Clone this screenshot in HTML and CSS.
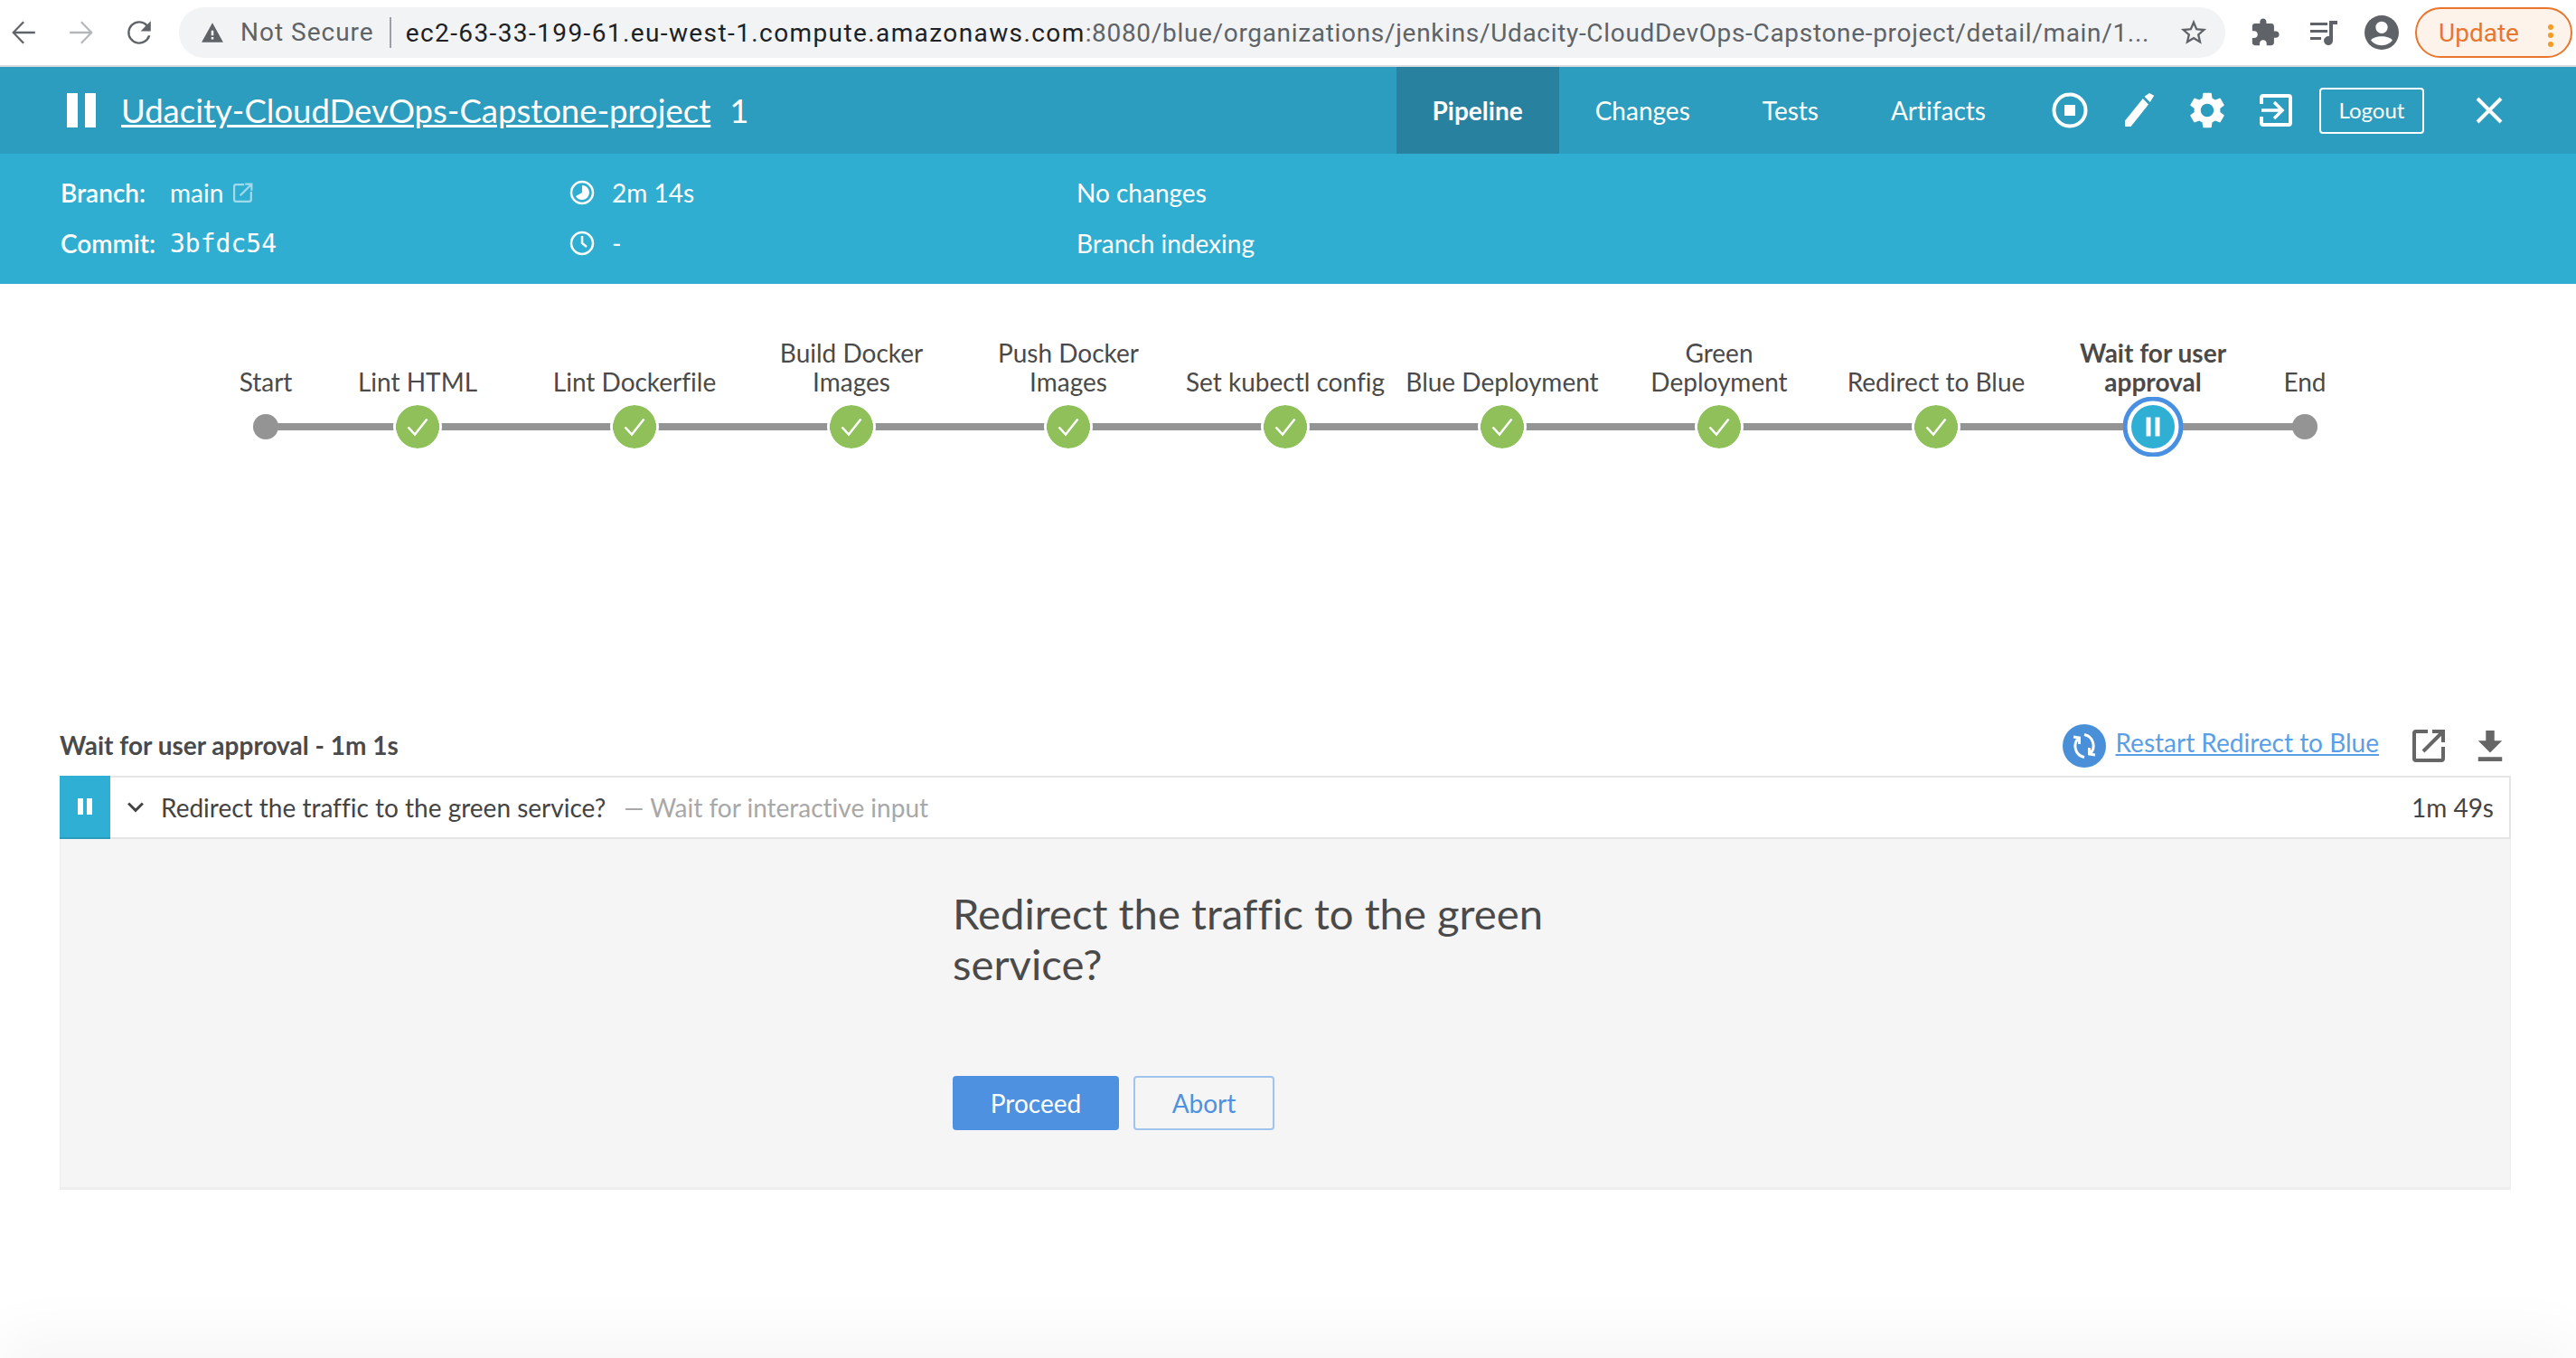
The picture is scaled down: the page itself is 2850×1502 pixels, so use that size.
FILE: index.html
```html
<!DOCTYPE html>
<html lang="en">
<head>
    <meta charset="UTF-8">
    <title>Udacity-CloudDevOps-Capstone-project 1</title>
    <link rel="stylesheet" href="styles.css">
</head>
<body>
<div class="toolbar">
    <svg class="tool-icon nav-back" viewBox="2 2 20 20"><path d="M20 11.2H6.600l6-6-1-1L4 12l7.600 7.800 1-1-6-6H20z"/></svg>
    <svg class="tool-icon nav-forward" viewBox="2 2 20 20"><path d="M4 11.2h13.400l-6-6 1-1L20 12l-7.600 7.800-1-1 6-6H4z"/></svg>
    <svg class="tool-icon nav-reload" viewBox="2 2 20 20"><path d="M17.65 6.35A7.96 7.96 0 0 0 12 4a8 8 0 1 0 7.730 10h-1.600A6.500 6.500 0 1 1 12 5.500c1.800 0 3.300.75 4.500 1.950L13 11h7V4z"/></svg>
    <div class="omnibox">
        <svg class="warn-icon" viewBox="0 0 24 24"><path d="M1 22h22L12 2zm12.200-3h-2.400v-2.400h2.400zm0-4h-2.400v-5h2.400z"/></svg>
        <span class="not-secure">Not Secure</span>
        <span class="url"><b>ec2-63-33-199-61.eu-west-1.compute.amazonaws.com</b>:8080/blue/organizations/jenkins/Udacity-CloudDevOps-Capstone-project/detail/main/1...</span>
        <svg class="star-icon" viewBox="0 0 24 24"><path d="M22 9.24l-7.190-.62L12 2 9.190 8.630 2 9.240l5.460 4.730L5.820 21 12 17.270 18.180 21l-1.630-7.030L22 9.240zM12 15.400l-3.760 2.270 1-4.280-3.320-2.880 4.380-.38L12 6.100l1.710 4.040 4.380.38-3.320 2.880 1 4.280L12 15.400z"/></svg>
    </div>
    <svg class="tool-icon puzzle" viewBox="0 0 24 24"><path d="M20.500 11H19V7c0-1.100-.9-2-2-2h-4V3.500C13 2.120 11.880 1 10.500 1S8 2.120 8 3.500V5H4c-1.100 0-1.990.9-1.990 2v3.800H3.500c1.490 0 2.700 1.210 2.700 2.700s-1.210 2.700-2.700 2.700H2V20c0 1.100.9 2 2 2h3.800v-1.500c0-1.490 1.210-2.700 2.700-2.700 1.490 0 2.700 1.210 2.700 2.700V22H17c1.100 0 2-.9 2-2v-4h1.500c1.380 0 2.500-1.120 2.500-2.500S21.880 11 20.500 11z"/></svg>
    <svg class="tool-icon media" viewBox="0 0 32 32"><path d="M1 5h19v3H1zM1 13h19v3H1zM1 21h12v3H1zM22 3h9v4h-5v18a5 5 0 1 1-4-4.900z"/></svg>
    <svg class="tool-icon avatar" viewBox="0 0 40 40"><path fill-rule="evenodd" d="M20 0a20 20 0 1 1 0 40 20 20 0 0 1 0-40zm0 7a7 7 0 1 0 0 14 7 7 0 0 0 0-14zm0 28c5.500 0 10-2.500 12.500-6-1-2.500-7-4.500-12.500-4.500S8.500 26.500 7.500 29C10 32.500 14.500 35 20 35z"/></svg>
    <div class="update-pill">
        <span>Update</span>
        <i class="update-dots"></i>
    </div>
</div>

<div class="bar">
    <div class="bar-pause"><i></i><i></i></div>
    <a class="bar-title" href="#">Udacity-CloudDevOps-Capstone-project</a>
    <span class="bar-run">1</span>
    <div class="tabs">
        <a class="tab active" href="#">Pipeline</a>
        <a class="tab" href="#">Changes</a>
        <a class="tab" href="#">Tests</a>
        <a class="tab" href="#">Artifacts</a>
    </div>
    <div class="actions">
        <svg class="act stop" viewBox="0 0 40 40"><circle cx="20" cy="20" r="17.500" fill="none" stroke="#fff" stroke-width="4"/><rect x="14" y="14" width="12" height="12" fill="#fff"/></svg>
        <svg class="act pencil" viewBox="0 0 38 38"><path fill="#fff" d="M1 30.500V37h6.500L27 12.500 20.800 6zM22.500 3.800 28.800 10l4.400-7.300L28 0z" transform="translate(3 0)"/></svg>
        <svg class="act gear" viewBox="2 1.500 20 21"><path fill="#fff" d="M19.140 12.940c.04-.3.06-.61.06-.94 0-.32-.02-.64-.07-.94l2.030-1.580a.49.49 0 0 0 .12-.61l-1.920-3.320a.488.488 0 0 0-.59-.22l-2.390.96c-.5-.38-1.030-.7-1.620-.94l-.36-2.540a.484.484 0 0 0-.48-.41h-3.840c-.24 0-.43.17-.47.41l-.36 2.540c-.59.24-1.130.57-1.620.94l-2.390-.96c-.22-.08-.47 0-.59.22L2.740 8.870c-.12.21-.08.47.12.61l2.030 1.580c-.05.3-.09.63-.09.94s.02.64.07.94l-2.030 1.580a.49.49 0 0 0-.12.61l1.920 3.320c.12.22.37.29.59.22l2.390-.96c.5.38 1.030.7 1.620.94l.36 2.540c.05.24.24.41.48.41h3.840c.24 0 .44-.17.47-.41l.36-2.540c.59-.24 1.130-.56 1.620-.94l2.390.96c.22.08.47 0 .59-.22l1.920-3.320c.12-.22.07-.47-.12-.61l-2.010-1.580zM12 15.600c-1.980 0-3.600-1.620-3.600-3.600s1.620-3.600 3.600-3.600 3.600 1.620 3.600 3.600-1.620 3.600-3.600 3.600z"/></svg>
        <svg class="act exit" viewBox="0 0 36 36"><path fill="none" stroke="#fff" stroke-width="4" d="M2 11V4a2 2 0 0 1 2-2h28a2 2 0 0 1 2 2v28a2 2 0 0 1-2 2H4a2 2 0 0 1-2-2v-7"/><path fill="none" stroke="#fff" stroke-width="3.500" d="M2 18h22M16 9l9 9-9 9"/></svg>
        <a class="logout" href="#">Logout</a>
        <svg class="act close" viewBox="0 0 30 30"><path stroke="#fff" stroke-width="4" d="M2 2l26 26M28 2L2 28"/></svg>
    </div>
</div>

<div class="meta">
    <div class="meta-col col-a">
        <div class="meta-row"><b class="meta-key">Branch:</b><span>main</span>
            <svg class="ext-mini" viewBox="0 0 20 20"><path fill="none" stroke="#fff" stroke-width="2" d="M11 2H3a2 2 0 0 0-2 2v13a2 2 0 0 0 2 2h13a2 2 0 0 0 2-2V9M7 13 18 2M12 1.500h6.500V8"/></svg>
        </div>
        <div class="meta-row"><b class="meta-key">Commit:</b><span class="mono">3bfdc54</span></div>
    </div>
    <div class="meta-col col-b">
        <div class="meta-row">
            <svg class="time-icon" viewBox="0 0 28 28"><circle cx="14" cy="14" r="12" fill="none" stroke="#fff" stroke-width="2.500"/><path fill="#fff" d="M14 6a8 8 0 1 1-7 12l7-4z"/></svg>
            <span>2m 14s</span>
        </div>
        <div class="meta-row">
            <svg class="time-icon" viewBox="0 0 28 28"><circle cx="14" cy="14" r="12" fill="none" stroke="#fff" stroke-width="2.500"/><path fill="none" stroke="#fff" stroke-width="2.500" d="M14 6v8l5 4"/></svg>
            <span>-</span>
        </div>
    </div>
    <div class="meta-col">
        <div class="meta-row">No changes</div>
        <div class="meta-row">Branch indexing</div>
    </div>
</div>

<div class="pipeline">
    <div class="stage edge first"><div class="stage-name">Start</div><div class="stage-track"><i class="dot"></i></div></div>
    <div class="stage"><div class="stage-name">Lint HTML</div><div class="stage-track"><svg class="done" viewBox="0 0 48 48"><circle cx="24" cy="24" r="24" fill="#8fc05a"/><path fill="none" stroke="#fff" stroke-width="2.500" d="M13.500 24.500l7.500 8 13.500-17"/></svg></div></div>
    <div class="stage"><div class="stage-name">Lint Dockerfile</div><div class="stage-track"><svg class="done" viewBox="0 0 48 48"><circle cx="24" cy="24" r="24" fill="#8fc05a"/><path fill="none" stroke="#fff" stroke-width="2.500" d="M13.500 24.500l7.500 8 13.500-17"/></svg></div></div>
    <div class="stage"><div class="stage-name">Build Docker<br>Images</div><div class="stage-track"><svg class="done" viewBox="0 0 48 48"><circle cx="24" cy="24" r="24" fill="#8fc05a"/><path fill="none" stroke="#fff" stroke-width="2.500" d="M13.500 24.500l7.500 8 13.500-17"/></svg></div></div>
    <div class="stage"><div class="stage-name">Push Docker<br>Images</div><div class="stage-track"><svg class="done" viewBox="0 0 48 48"><circle cx="24" cy="24" r="24" fill="#8fc05a"/><path fill="none" stroke="#fff" stroke-width="2.500" d="M13.500 24.500l7.500 8 13.500-17"/></svg></div></div>
    <div class="stage"><div class="stage-name">Set kubectl config</div><div class="stage-track"><svg class="done" viewBox="0 0 48 48"><circle cx="24" cy="24" r="24" fill="#8fc05a"/><path fill="none" stroke="#fff" stroke-width="2.500" d="M13.500 24.500l7.500 8 13.500-17"/></svg></div></div>
    <div class="stage"><div class="stage-name">Blue Deployment</div><div class="stage-track"><svg class="done" viewBox="0 0 48 48"><circle cx="24" cy="24" r="24" fill="#8fc05a"/><path fill="none" stroke="#fff" stroke-width="2.500" d="M13.500 24.500l7.500 8 13.500-17"/></svg></div></div>
    <div class="stage"><div class="stage-name">Green<br>Deployment</div><div class="stage-track"><svg class="done" viewBox="0 0 48 48"><circle cx="24" cy="24" r="24" fill="#8fc05a"/><path fill="none" stroke="#fff" stroke-width="2.500" d="M13.500 24.500l7.500 8 13.500-17"/></svg></div></div>
    <div class="stage"><div class="stage-name">Redirect to Blue</div><div class="stage-track"><svg class="done" viewBox="0 0 48 48"><circle cx="24" cy="24" r="24" fill="#8fc05a"/><path fill="none" stroke="#fff" stroke-width="2.500" d="M13.500 24.500l7.500 8 13.500-17"/></svg></div></div>
    <div class="stage current"><div class="stage-name">Wait for user<br>approval</div><div class="stage-track"><svg class="paused" viewBox="0 0 66 66"><circle cx="33" cy="33" r="31" fill="#fff" stroke="#4a90e2" stroke-width="5"/><circle cx="33" cy="33" r="24" fill="#2eafd3"/><path fill="#fff" d="M25.500 22.500h5v21h-5zM35.500 22.500h5v21h-5z"/></svg></div></div>
    <div class="stage edge last"><div class="stage-name">End</div><div class="stage-track"><i class="dot"></i></div></div>
</div>

<div class="detail">
    <div class="detail-head">
        <div class="detail-title">Wait for user approval - 1m 1s</div>
        <svg class="restart-icon" viewBox="0 0 48 48"><circle cx="24" cy="24" r="24" fill="#4a90d9"/><path fill="none" stroke="#fff" stroke-width="3" d="M12 14l6.500 1v7M36 34l-6.500-1v-7M18 15a12.500 12.500 0 0 0 6 21.500M30 33a12.500 12.500 0 0 0-6-21.500"/></svg>
        <a class="restart-link" href="#">Restart Redirect to Blue</a>
        <svg class="open-icon" viewBox="0 0 36 36"><path fill="none" stroke="#666" stroke-width="4" d="M17 2H4a2 2 0 0 0-2 2v28a2 2 0 0 0 2 2h28a2 2 0 0 0 2-2V19M12 24 33 3M22 2h12v12"/></svg>
        <svg class="down-icon" viewBox="0 0 28 36"><path fill="#666" d="M9 0h10v12h9L14 26 0 12h9zM0 31h28v5H0z"/></svg>
    </div>
    <div class="step">
        <div class="step-state"><i></i><i></i></div>
        <svg class="chevron" viewBox="0 1 16 10"><path fill="none" stroke="#444" stroke-width="2.600" d="M1 2l7 7 7-7"/></svg>
        <span class="step-name">Redirect the traffic to the green service?</span>
        <span class="step-note">— Wait for interactive input</span>
        <span class="step-time">1m 49s</span>
    </div>
    <div class="input-box">
        <h1 class="input-title">Redirect the traffic to the green service?</h1>
        <div class="input-buttons">
            <button class="btn primary">Proceed</button>
            <button class="btn outline">Abort</button>
        </div>
    </div>
</div>
<div class="page-shade"></div>
</body>
</html>
```

FILE: styles.css
```css
* {
    box-sizing: border-box;
}

html, body {
    margin: 0;
    padding: 0;
}

body {
    height: 1502px;
    overflow: hidden;
    background: #ffffff;
    color: #444444;
    font-family: Lato, "Liberation Sans", sans-serif;
    font-size: 28px;
    font-variant-ligatures: none;
    position: relative;
}

a {
    color: inherit;
}

svg {
    display: block;
    flex: none;
}

/* browser toolbar */
.toolbar {
    height: 74px;
    border-bottom: 2px solid #dadce0;
    display: flex;
    align-items: center;
    padding-left: 10px;
    font-family: Roboto, sans-serif;
}

.tool-icon {
    fill: #5f6368;
}

.nav-back,
.nav-forward,
.nav-reload {
    width: 32px;
    height: 32px;
}

.nav-forward {
    margin-left: 32px;
    fill: #b4b6b9;
}

.nav-reload {
    margin-left: 32px;
}

.omnibox {
    width: 2264px;
    height: 56px;
    margin-left: 28px;
    border-radius: 28px;
    background: #f1f3f4;
    display: flex;
    align-items: center;
    padding-left: 24px;
}

.warn-icon {
    width: 26px;
    height: 26px;
    fill: #5f6368;
}

.not-secure {
    margin-left: 18px;
    padding-right: 17px;
    border-right: 2px solid #9aa0a6;
    color: #5f6368;
    font-size: 28px;
    line-height: 34px;
    letter-spacing: 1px;
    height: 34px;
    white-space: nowrap;
}

.url {
    margin-left: 16px;
    width: 1930px;
    white-space: nowrap;
    color: #5f6368;
    font-size: 28px;
    letter-spacing: 0.68px;
}

.url b {
    font-weight: 400;
    color: #202124;
    letter-spacing: 1.4px;
}

.star-icon {
    width: 34px;
    height: 34px;
    margin-left: 31px;
    fill: #5f6368;
}

.puzzle {
    width: 34px;
    height: 34px;
    margin-left: 27px;
}

.media {
    width: 32px;
    height: 32px;
    margin-left: 32px;
}

.avatar {
    width: 38px;
    height: 38px;
    margin-left: 29px;
}

.update-pill {
    width: 174px;
    height: 56px;
    margin-left: 18px;
    border: 2px solid #e8762d;
    border-radius: 28px;
    background: #fdf3ea;
    color: #e8762d;
    font-size: 28px;
    display: flex;
    align-items: center;
    padding-left: 24px;
    position: relative;
}

.update-dots {
    position: absolute;
    left: 145px;
    top: 17px;
    width: 6px;
    height: 6px;
    border-radius: 50%;
    background: #f29b26;
    box-shadow: 0 9px 0 #f29b26, 0 19px 0 #f29b26;
}

/* blue ocean top bar */
.bar {
    height: 96px;
    background: #2c9dbe;
    color: #ffffff;
    display: flex;
    align-items: center;
    padding-left: 74px;
}

.bar-pause {
    display: flex;
    width: 32px;
    justify-content: space-between;
}

.bar-pause i {
    display: block;
    width: 12px;
    height: 38px;
    background: #ffffff;
}

.bar-title {
    margin-left: 28px;
    font-size: 36.5px;
    font-weight: 400;
}

.bar-run {
    margin-left: 21px;
    font-size: 36.5px;
}

.tabs {
    margin-left: auto;
    display: flex;
    height: 100%;
}

.tab {
    padding: 0 40px;
    display: flex;
    align-items: center;
    text-decoration: none;
    font-size: 28px;
}

.tab.active {
    background: #27819f;
    font-weight: 700;
}

.actions {
    display: flex;
    align-items: center;
    margin-left: 33px;
    margin-right: 81px;
}

.act.stop {
    width: 40px;
    height: 40px;
}

.act.pencil {
    width: 38px;
    height: 38px;
    margin-left: 37px;
}

.act.gear {
    width: 40px;
    height: 42px;
    margin-left: 37px;
}

.act.exit {
    width: 36px;
    height: 36px;
    margin-left: 38px;
}

.logout {
    width: 116px;
    height: 51px;
    margin-left: 30px;
    padding-bottom: 2px;
    border: 2px solid #ffffff;
    border-radius: 4px;
    display: flex;
    align-items: center;
    justify-content: center;
    text-decoration: none;
    font-size: 24px;
}

.act.close {
    width: 30px;
    height: 30px;
    margin-left: 57px;
}

/* run summary */
.meta {
    height: 144px;
    background: #30aed2;
    color: #ffffff;
    display: flex;
    padding: 15px 0 0 67px;
}

.meta-col {
    display: flex;
    flex-direction: column;
}

.col-a {
    width: 563px;
}

.col-b {
    width: 561px;
}

.meta-row {
    height: 56px;
    display: flex;
    align-items: center;
    white-space: nowrap;
}

.meta-key {
    width: 121px;
    font-weight: 600;
}

.mono {
    font-family: "DejaVu Sans Mono", monospace;
}

.ext-mini {
    width: 22px;
    height: 24px;
    margin-left: 11px;
    opacity: 0.55;
}

.time-icon {
    width: 28px;
    height: 28px;
    margin-right: 19px;
}

/* stages */
.pipeline {
    display: flex;
    padding-left: 246px;
    margin-top: 60px;
}

.stage {
    width: 240px;
    display: flex;
    flex-direction: column;
    align-items: center;
}

.stage.edge {
    width: 96px;
}

.stage-name {
    height: 64px;
    display: flex;
    align-items: flex-end;
    line-height: 32px;
    text-align: center;
    white-space: nowrap;
    color: #4a4a4a;
}

.stage.current .stage-name {
    font-weight: 700;
}

.stage-track {
    align-self: stretch;
    height: 66px;
    margin-top: 1px;
    display: flex;
    align-items: center;
    justify-content: center;
    background: linear-gradient(#949494, #949494) center / 100% 8px no-repeat;
}

.stage.first .stage-track {
    background-position: right center;
    background-size: 50% 8px;
}

.stage.last .stage-track {
    background-position: left center;
    background-size: 50% 8px;
}

.dot {
    width: 28px;
    height: 28px;
    border-radius: 50%;
    background: #949494;
}

.done {
    width: 48px;
    height: 48px;
    box-shadow: 0 0 0 3px #ffffff;
    border-radius: 50%;
}

.paused {
    width: 66px;
    height: 66px;
}

/* selected step */
.detail {
    margin: 286px 72px 0 66px;
}

.detail-head {
    height: 67px;
    display: flex;
    align-items: center;
    padding-right: 9px;
}

.detail-title {
    margin-right: auto;
    margin-bottom: 1px;
    font-weight: 700;
    color: #4a4a4a;
}

.restart-icon {
    width: 48px;
    height: 48px;
}

.restart-link {
    margin-left: 10px;
    margin-bottom: 8px;
    color: #5a9fe6;
}

.open-icon {
    width: 36px;
    height: 36px;
    margin-left: 37px;
}

.down-icon {
    width: 28px;
    height: 34px;
    margin-left: 36px;
}

.step {
    height: 70px;
    border: 2px solid #e5e5e5;
    border-left: 0;
    display: flex;
    align-items: center;
    background: #ffffff;
}

.step-state {
    width: 56px;
    height: 70px;
    margin-top: -2px;
    margin-bottom: -2px;
    background: #2fafd3;
    border-bottom: 2px solid #2a9dbd;
    display: flex;
    gap: 4px;
    align-items: center;
    justify-content: center;
}

.step-state i {
    display: block;
    width: 6px;
    height: 18px;
    background: #ffffff;
}

.chevron {
    width: 18px;
    height: 12px;
    margin-left: 19px;
}

.step-name {
    margin-left: 19px;
}

.step-note {
    margin-left: 20px;
    color: #a8a8a8;
}

.step-time {
    margin-left: auto;
    margin-right: 17px;
}

.input-box {
    height: 388px;
    background: #f5f5f5;
    border: 1px solid #ececec;
    border-top: 0;
    border-bottom: 3px solid #eeeeee;
    padding: 54px 0 0 987px;
}

.input-title {
    width: 680px;
    margin: 0;
    font-size: 47.25px;
    font-weight: 400;
    line-height: 56px;
    color: #4a4a4a;
}

.input-buttons {
    display: flex;
    gap: 16px;
    margin-top: 96px;
}

.btn {
    height: 60px;
    border-radius: 4px;
    font-family: inherit;
    font-size: 28px;
    padding: 0;
}

.primary {
    width: 184px;
    border: 0;
    background: #4e91e0;
    color: #ffffff;
}

.outline {
    width: 156px;
    border: 2px solid #a0c4ee;
    background: transparent;
    color: #4e91e0;
}

/* soft shadow of the window at the bottom */
.page-shade {
    position: absolute;
    left: 30px;
    right: 30px;
    bottom: -50px;
    height: 50px;
    box-shadow: 0 0 60px 30px rgba(0, 0, 0, 0.035);
}
```
